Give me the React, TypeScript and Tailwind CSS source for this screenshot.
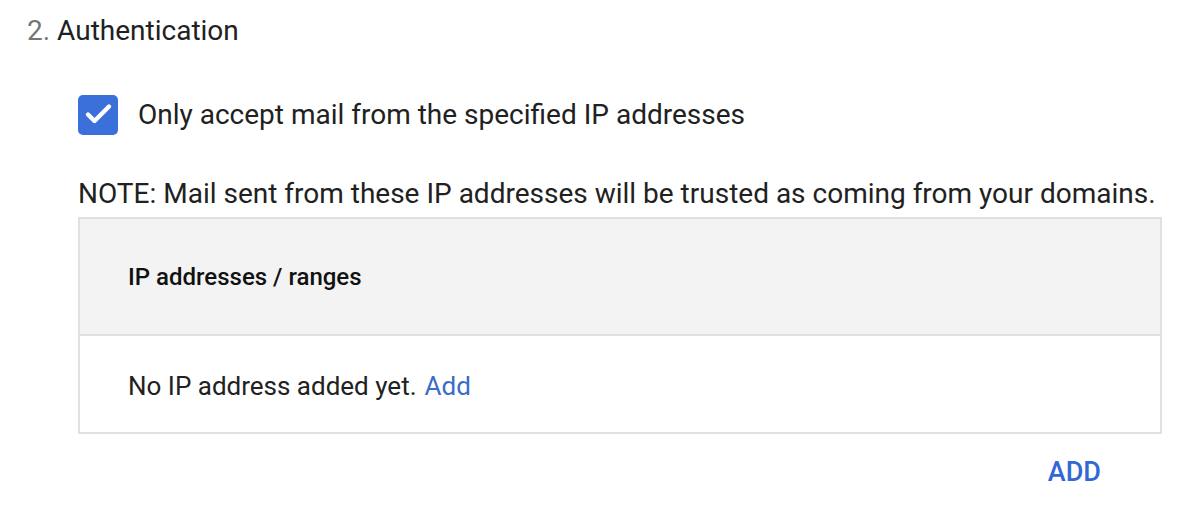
export default function App() {
  return (
    <div className="w-[1194px] h-[520px] bg-white text-[#212121] overflow-hidden" style={{ fontFamily: "Roboto, 'Liberation Sans', sans-serif" }}>
      <div className="pl-[27px] pt-[12px]">
        <div className="text-[28px] leading-[38px]">
          <span className="text-[#757575]">2. </span>
          <span>Authentication</span>
        </div>
        <div className="pl-[51px] pr-[33px]">
          <div className="flex items-center mt-[45px] h-[40px]">
            <div className="w-[40px] h-[40px] shrink-0 rounded-[5px] bg-[#3b6fd9] flex items-center justify-center">
              <svg width="40" height="40" viewBox="0 0 40 40" fill="none" stroke="white" strokeWidth="4.4" strokeLinecap="round" strokeLinejoin="round" className="shrink-0">
                <path d="M10 19.5L16.5 26L31 11.5" />
              </svg>
            </div>
            <span className="ml-[20px] text-[28px]">Only accept mail from the specified IP addresses</span>
          </div>
          <div className="mt-[40px] text-[28px] leading-[38px]">NOTE: Mail sent from these IP addresses will be trusted as coming from your domains.</div>
          <div className="mt-[4px] border-2 border-[#e0e0e0] w-[1084px]">
            <div className="h-[117px] bg-[#f3f3f3] border-b-2 border-[#e0e0e0] flex items-center pl-[48px] text-[24px] font-medium text-[#111]">IP addresses / ranges</div>
            <div className="h-[96px] flex items-center pl-[48px] text-[26px] pt-[5px]">
              <span>No IP address added yet.</span>
              <span className="ml-[8px] text-[#3a6cc9]">Add</span>
            </div>
          </div>
          <div className="flex justify-end w-[1084px] pr-[61px] mt-[18px]">
            <span className="text-[27px] font-medium text-[#3367d6]">ADD</span>
          </div>
        </div>
      </div>
    </div>
  );
}
